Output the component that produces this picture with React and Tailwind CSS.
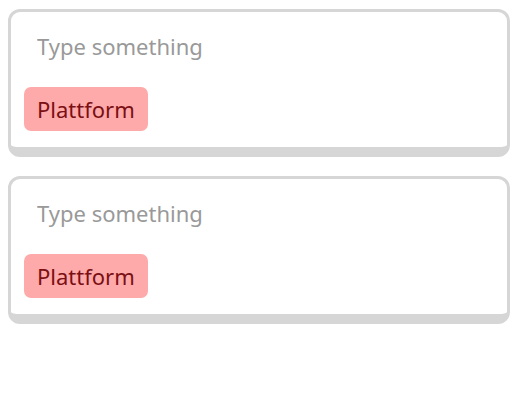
import React, { useState } from "react";

const font = { fontFamily: '"Noto Sans", "Open Sans", sans-serif' };

function TagInput({ tags }) {
  const [value, setValue] = useState("");

  return (
    <div className="w-[502px] bg-white border-[3px] border-b-[10px] border-[#d6d6d6] rounded-[12px] px-[13px] pt-[13px] pb-4">
      <input
        value={value}
        onChange={(e) => setValue(e.target.value)}
        placeholder="Type something"
        className="block w-full h-[42px] px-[13px] text-[22px] text-[#333] placeholder:text-[#999] outline-none bg-transparent"
        style={font}
      />
      <div className="flex gap-2 mt-[20px]">
        {tags.map((tag) => (
          <span
            key={tag}
            className="h-[44px] flex items-center px-[13px] rounded-[7px] bg-[#ffaaaa] text-[#7a0f14] text-[22px]"
            style={font}
          >
            {tag}
          </span>
        ))}
      </div>
    </div>
  );
}

export default function App() {
  return (
    <div className="w-[525px] h-[401px] bg-white pl-2 pt-[9px] flex flex-col gap-[19px]">
      <TagInput tags={["Plattform"]} />
      <TagInput tags={["Plattform"]} />
    </div>
  );
}
